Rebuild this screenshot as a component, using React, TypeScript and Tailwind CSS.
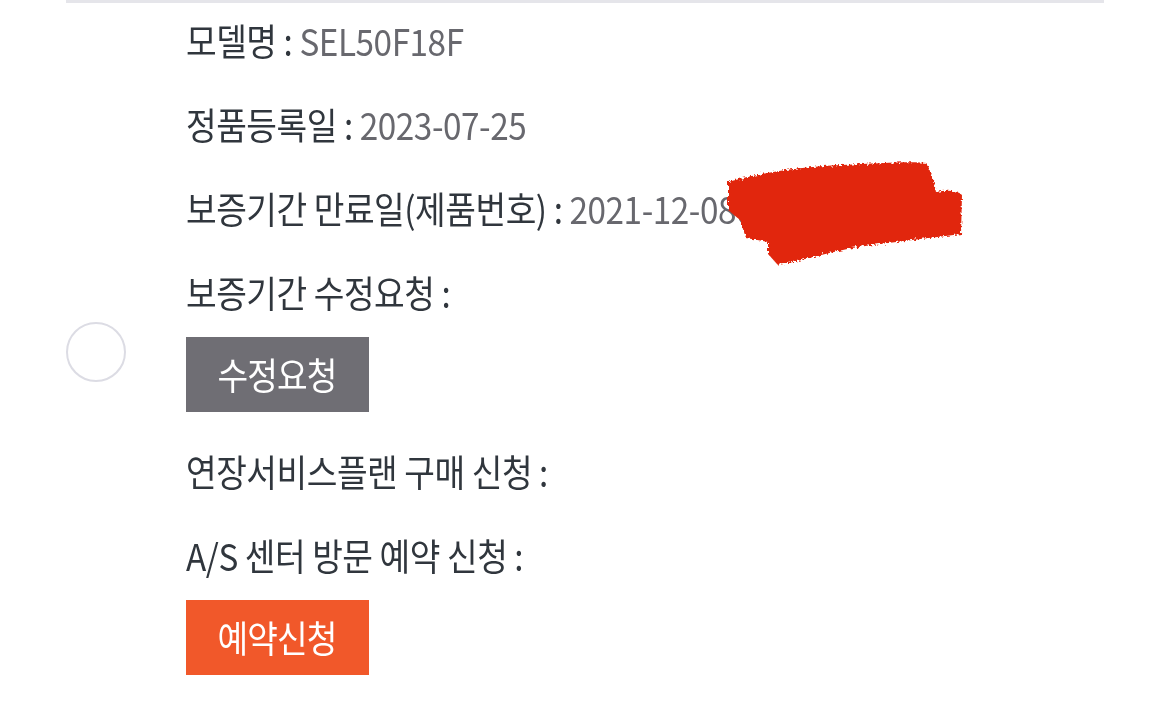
import { ReactNode } from "react";

const FONT = { fontFamily: "'Noto Sans CJK KR', 'Noto Sans', sans-serif" };

function Field({ label, value, children }: { label: string; value?: ReactNode; children?: ReactNode }) {
  return (
    <div className="flex flex-col gap-5">
      <div className="h-12 flex items-center">
        <div className="origin-left scale-x-[0.9] whitespace-nowrap text-[37px] font-normal tracking-[-0.5px] text-[#30363d]">
          <span>{label} : </span>
          {value && <span className="text-[#68686e]">{value}</span>}
        </div>
      </div>
      {children}
    </div>
  );
}

function Btn({ label, color }: { label: string; color: string }) {
  return (
    <button className={`w-[183px] h-[75px] flex items-center justify-center text-white ${color}`}>
      <span className="scale-x-[0.9] text-[37px] font-normal tracking-[-1px]">{label}</span>
    </button>
  );
}

function Scribble() {
  return (
    <svg className="absolute left-[722px] top-[158px]" width="250" height="116" viewBox="0 0 250 116">
      <defs>
        <filter id="rough" x="-10%" y="-10%" width="120%" height="120%">
          <feTurbulence type="fractalNoise" baseFrequency="0.4" numOctaves="2" seed="5" />
          <feDisplacementMap in="SourceGraphic" scale="6" />
        </filter>
      </defs>
      <path
        filter="url(#rough)"
        fill="#e1270d"
        d="M6 24 C40 14 80 9 120 7 C160 5 190 3 205 5 L212 24 L214 34 C225 32 235 32 240 37 L239 76 C210 80 170 84 130 90 C100 96 75 104 56 107 L46 96 L46 84 L24 80 L18 62 L6 52 Z"
      />
    </svg>
  );
}

export default function App() {
  return (
    <div className="bg-white w-[1170px] h-[710px] overflow-hidden relative" style={FONT}>
      <div className="mx-[66px] border-t-[3px] border-[#e5e5ea] flex items-center">
        <div className="w-[60px] h-[60px] rounded-full border-2 border-[#dcdce4] shrink-0" />
        <div className="ml-[60px] pt-[14px] pb-[25px] flex flex-col gap-9">
          <Field label="모델명" value="SEL50F18F" />
          <Field label="정품등록일" value="2023-07-25" />
          <Field label="보증기간 만료일(제품번호)" value="2021-12-0800000000" />
          <Field label="보증기간 수정요청">
            <Btn label="수정요청" color="bg-[#6f6e74]" />
          </Field>
          <Field label="연장서비스플랜 구매 신청" />
          <Field label="A/S 센터 방문 예약 신청">
            <Btn label="예약신청" color="bg-[#f1582a]" />
          </Field>
        </div>
      </div>
      <Scribble />
    </div>
  );
}
